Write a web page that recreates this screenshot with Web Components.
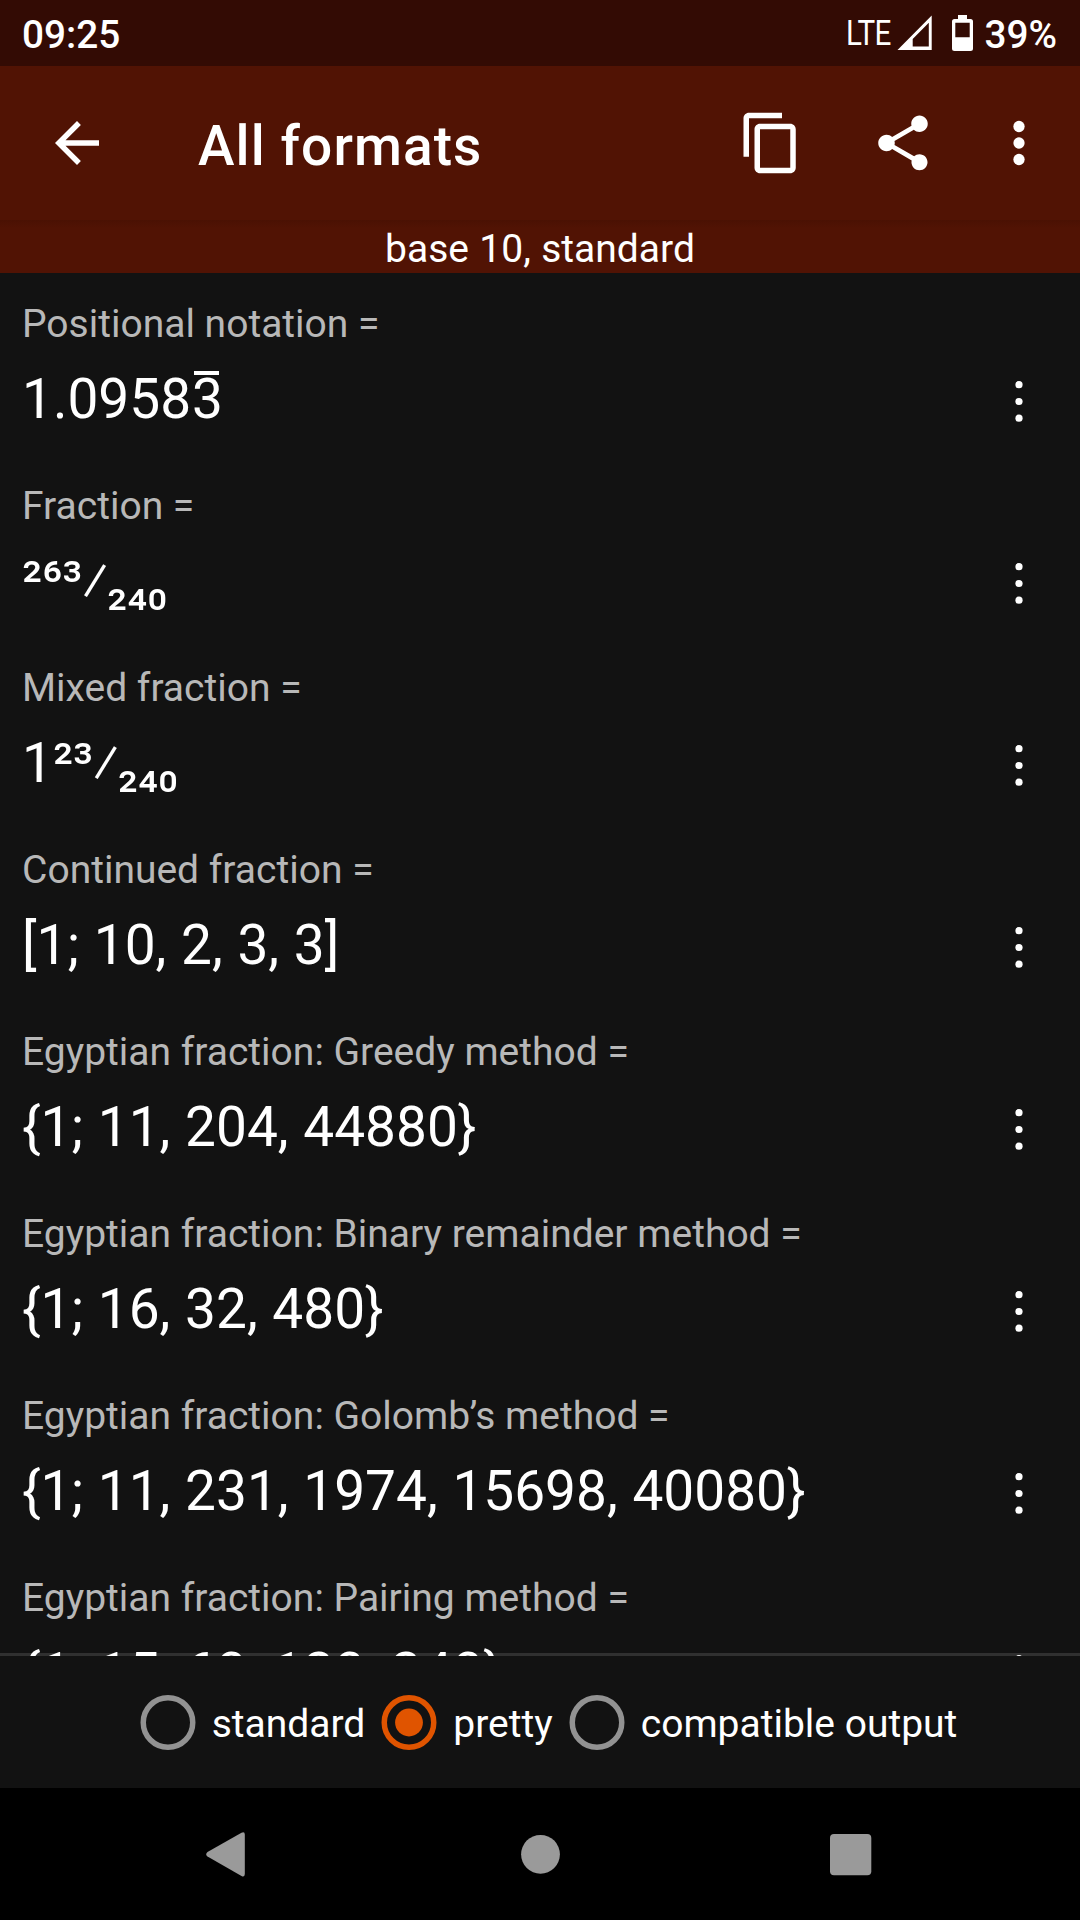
<!DOCTYPE html>
<html lang="en">
<head>
<meta charset="utf-8">
<title>All formats</title>
<style>
  html, body { margin: 0; padding: 0; background: #121212; }
  body { width: 1080px; height: 1920px; overflow: hidden; font-family: Roboto, "Noto Sans", sans-serif; color: #fff; }
</style>
</head>
<body>
<formats-screen></formats-screen>
<script>
const define = (name, html) => {
  const tpl = document.createElement('template');
  tpl.innerHTML = html;
  customElements.define(name, class extends HTMLElement {
    constructor() {
      super();
      this.attachShadow({ mode: 'open' }).appendChild(tpl.content.cloneNode(true));
    }
  });
};

define('status-bar', `
<style>
  :host { display: flex; box-sizing: border-box; height: 66px; background: #330b04; justify-content: space-between; padding: 0 23px 0 22px; font-size: 38.75px; font-weight: 500; line-height: 70px; }
  .right { display: flex; align-items: flex-start; }
  .lte { font-size: 34.4px; font-weight: 400; line-height: 66px; width: 51px; transform: scaleX(.86); transform-origin: 0 0; letter-spacing: -0.6px; }
  svg { display: block; width: 84px; height: 66px; }
  .pct { margin-left: 3px; }
</style>
<span>09:25</span>
<div class="right">
  <span class="lte">LTE</span>
  <svg viewBox="898 0 84 66" fill="#fff">
    <path fill-rule="evenodd" d="M932.7 15.5V50H898.5ZM929.8 22.8L913.7 39V46.5H929.8Z"/>
    <path fill-rule="evenodd" d="M959 15h9v4h3.5q2.5 0 2.5 2.5V48.5q0 2.5-2.5 2.5h-16q-2.5 0-2.5-2.5V21.5q0-2.5 2.5-2.5h3.5ZM956.3 22.7V37.3H970.7V22.7Z"/>
  </svg>
  <span class="pct">39%</span>
</div>`);

define('tool-icon', `
<style>
  :host { display: block; width: 66px; height: 66px; }
  ::slotted(svg) { display: block; width: 66px; height: 66px; fill: #fff; }
</style><slot></slot>`);

define('app-toolbar', `
<style>
  :host { display: flex; box-sizing: border-box; height: 154px; background: #511304; align-items: center; padding: 0 28px 0 44px; }
  h1 { margin: 0 0 0 88px; flex: 1; font-size: 55px; font-weight: 500; line-height: 64px; padding-top: 6px; letter-spacing: 1.1px; }
  .actions { display: flex; }
  .share { margin-left: 66px; }
  .more { margin-left: 50px; }
</style>
<tool-icon><svg viewBox="0 0 24 24"><path d="M20 11H7.83l5.59-5.59L12 4l-8 8 8 8 1.41-1.41L7.83 13H20z"/></svg></tool-icon>
<h1><slot></slot></h1>
<div class="actions">
  <tool-icon><svg viewBox="0 0 24 24"><path d="M16 1H4c-1.1 0-2 .9-2 2v14h2V3h12V1zm3 4H8c-1.1 0-2 .9-2 2v14c0 1.1.9 2 2 2h11c1.1 0 2-.9 2-2V7c0-1.1-.9-2-2-2zm0 16H8V7h11v14z"/></svg></tool-icon>
  <tool-icon class="share"><svg viewBox="0 0 24 24"><path d="M18 16.08c-.76 0-1.44.3-1.96.77L8.91 12.7c.05-.23.09-.46.09-.7s-.04-.47-.09-.7l7.05-4.11c.54.5 1.25.81 2.04.81 1.66 0 3-1.34 3-3s-1.34-3-3-3-3 1.34-3 3c0 .24.04.47.09.7L8.04 9.81C7.5 9.31 6.79 9 6 9c-1.66 0-3 1.34-3 3s1.34 3 3 3c.79 0 1.5-.31 2.04-.81l7.12 4.16c-.05.21-.08.43-.08.65 0 1.61 1.31 2.92 2.92 2.92s2.92-1.31 2.92-2.92-1.31-2.92-2.92-2.92z"/></svg></tool-icon>
  <tool-icon class="more"><svg viewBox="0 0 24 24"><circle cx="12" cy="6" r="2.05"/><circle cx="12" cy="12" r="2.05"/><circle cx="12" cy="18" r="2.05"/></svg></tool-icon>
</div>`);

define('mode-banner', `
<style>
  :host { display: block; height: 53px; background: linear-gradient(#4a1103, #511304 8px); text-align: center; font-size: 39px; line-height: 59px; word-spacing: .7px; }
</style><slot></slot>`);

define('over-line', `
<style>
  :host { display: inline-block; position: relative; margin-left: 1px; }
  :host::before { content: ""; position: absolute; left: 2px; right: 3.5px; top: 8px; height: 4px; background: currentColor; }
</style><slot></slot>`);

define('format-row', `
<style>
  :host { display: flex; flex-direction: column; box-sizing: border-box; height: 182px; flex: none; padding-left: 22px; white-space: nowrap; }
  .label { height: 90px; font-size: 39px; line-height: 102px; color: #b8b8b8; }
  .line { display: flex; height: 92px; justify-content: space-between; }
  .value { font-size: 55px; line-height: 72px; word-spacing: 1px; }
  svg { display: block; width: 66px; height: 92px; margin-right: 28px; }
</style>
<div class="label"><slot name="label"></slot></div>
<div class="line">
  <div class="value"><slot></slot></div>
  <svg viewBox="0 0 66 92" fill="#fff"><circle cx="33" cy="21.7" r="3.6"/><circle cx="33" cy="38.5" r="3.6"/><circle cx="33" cy="55.2" r="3.6"/></svg>
</div>`);

define('format-list', `
<style>
  :host { display: flex; flex-direction: column; height: 1383px; overflow: hidden; background: #121212; box-shadow: inset 0 -3px #303030; }
</style><slot></slot>`);

define('radio-option', `
<style>
  :host { display: flex; align-items: center; font-size: 39px; line-height: 48px; }
  svg { display: block; width: 88px; height: 55px; fill: none; stroke: #929292; stroke-width: 5.5px; }
  .dot { display: none; fill: #e05400; stroke: none; }
  :host([checked]) svg { stroke: #e05400; }
  :host([checked]) .dot { display: block; }
  .text { padding: 4px 0 0 0; }
</style>
<svg viewBox="0 0 88 55"><circle cx="44" cy="27.5" r="24.75"/><circle class="dot" cx="44" cy="27.5" r="13.9"/></svg>
<span class="text"><slot></slot></span>`);

define('output-modes', `
<style>
  :host { display: flex; box-sizing: border-box; height: 132px; padding-left: 1px; background: #121212; justify-content: center; align-items: center; }
</style><slot></slot>`);

define('nav-bar', `
<style>
  :host { display: flex; height: 132px; background: #000; }
  svg { display: block; width: 1080px; height: 132px; fill: #9a9a9a; }
</style>
<svg viewBox="0 0 1080 132">
  <path d="M241.5 44.7L207.5 64Q204.8 66.3 207.5 68.6L241.5 87.9Q244.8 89.5 244.8 86V46.6Q244.8 43.1 241.5 44.7Z"/>
  <circle cx="540.5" cy="66.3" r="19.4"/>
  <rect x="830" y="46" width="41.3" height="41.3" rx="4"/>
</svg>`);

define('formats-screen', `
<style>
  :host { display: flex; flex-direction: column; width: 1080px; height: 1920px; }
  .den { margin-left: -.5px; }
</style>
<status-bar></status-bar>
<app-toolbar>All formats</app-toolbar>
<mode-banner>base 10, standard</mode-banner>
<format-list>
  <format-row><span slot="label">Positional notation =</span>1.0958<over-line>3</over-line></format-row>
  <format-row><span slot="label">Fraction =</span>²⁶³⁄<span class="den">₂₄₀</span></format-row>
  <format-row><span slot="label">Mixed fraction =</span>1²³⁄<span class="den">₂₄₀</span></format-row>
  <format-row><span slot="label">Continued fraction =</span>[1; 10, 2, 3, 3]</format-row>
  <format-row><span slot="label">Egyptian fraction: Greedy method =</span>{1; 11, 204, 44880}</format-row>
  <format-row><span slot="label">Egyptian fraction: Binary remainder method =</span>{1; 16, 32, 480}</format-row>
  <format-row><span slot="label">Egyptian fraction: Golomb’s method =</span>{1; 11, 231, 1974, 15698, 40080}</format-row>
  <format-row><span slot="label">Egyptian fraction: Pairing method =</span>{1; 15, 60, 120, 240}</format-row>
</format-list>
<output-modes>
  <radio-option>standard</radio-option>
  <radio-option checked>pretty</radio-option>
  <radio-option>compatible output</radio-option>
</output-modes>
<nav-bar></nav-bar>`);
</script>
</body>
</html>
